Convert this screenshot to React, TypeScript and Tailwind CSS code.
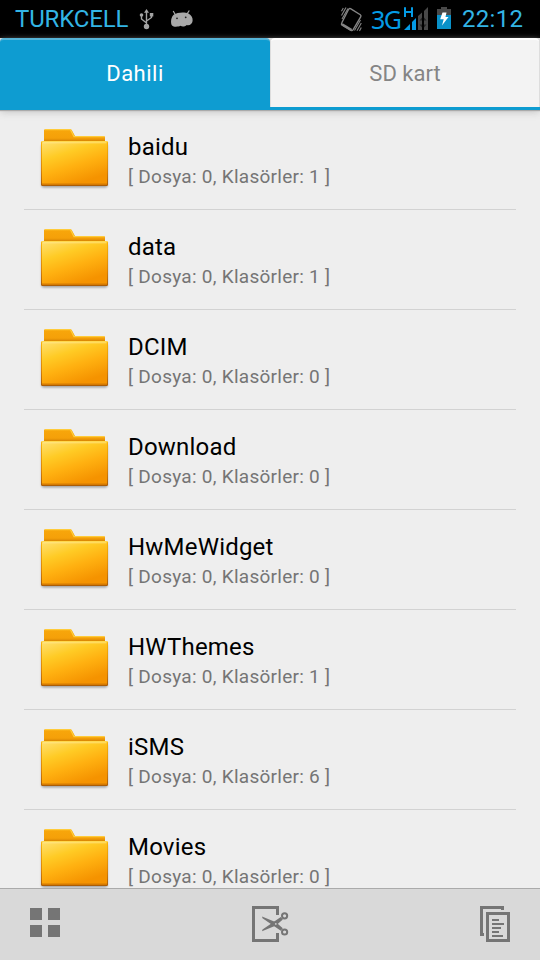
import React from "react";

const folders = [
  { name: "baidu", count: 1 },
  { name: "data", count: 1 },
  { name: "DCIM", count: 0 },
  { name: "Download", count: 0 },
  { name: "HwMeWidget", count: 0 },
  { name: "HWThemes", count: 1 },
  { name: "iSMS", count: 6 },
  { name: "Movies", count: 0 },
];

function UsbIcon() {
  return (
    <svg className="ml-[10px] h-[38px] w-4 shrink-0" viewBox="138 0 16 38" fill="none" stroke="#a3a3a3" strokeWidth="1.4">
      <path d="M146.5 11V26M141.5 15.5V19L146.5 23M151.5 15.5V17.5L146.5 21" />
      <path d="M146.5 9L149 12.7H144Z" fill="#a3a3a3" stroke="none" />
      <circle cx="141.5" cy="15" r="1.8" fill="#a3a3a3" stroke="none" />
      <rect x="149.8" y="13" width="3.5" height="3.5" fill="#a3a3a3" stroke="none" />
      <circle cx="146.5" cy="26.5" r="2.7" fill="#a3a3a3" stroke="none" />
    </svg>
  );
}

function DroidIcon() {
  return (
    <svg className="ml-[16px] h-[38px] w-6 shrink-0" viewBox="170 0 24 38">
      <path d="M174 14.5C177 12.5 184 11.5 188.5 13.5C191.5 15 193 18 192.6 21C192.2 24 189.5 25.8 186.8 25C184.5 27 182 27 180.5 25.8C178 27 173.5 27.2 172 25.5C170.3 23 171 16.5 174 14.5Z" fill="#a9a9a9" />
      <path d="M173.2 11L175.2 14.5M189.3 10.5L187 14" stroke="#a9a9a9" strokeWidth="1.2" />
      <circle cx="177" cy="18.3" r="0.9" fill="#222" />
      <circle cx="185.7" cy="17.3" r="0.9" fill="#222" />
    </svg>
  );
}

function VibrateIcon() {
  return (
    <svg className="h-[38px] w-6 shrink-0" viewBox="339 0 24 38" fill="none" stroke="#858585">
      <path d="M350.5 8.7L360.3 14.7Q361.3 15.5 360.8 16.7L353.2 29.6Q352.3 31 350.8 30.3L342.2 25.1Q341 24.3 341.7 23L348.5 9.5Q349.3 8 350.5 8.7Z" strokeWidth="1.4" />
      <path d="M342 24.2L351.6 30" strokeWidth="2.5" />
      <path d="M341.5 11.2L343.3 8M341.5 15.5L346 7.6M342 19L348 8.5M354.5 30.6L360.5 20M357 30.8L361.3 23M359.5 31L361.3 27.5" strokeWidth="1.1" />
    </svg>
  );
}

function SignalIcon() {
  return (
    <svg className="h-[38px] w-[26px] shrink-0" viewBox="403 0 26 38">
      <path d="M404 30L410 24V30Z" fill="#049be5" />
      <path d="M412 22L416 18V30H412Z" fill="#049be5" />
      <path d="M418 16L422 12.5V30H418ZM424 11L428 7V30H424Z" fill="#484848" />
      <path d="M419.5 20.5L422 17.5V20.5ZM424 17.5L426.5 20.5H424ZM419.5 24.5H422V27.5ZM424 24.5H426.5L424 27.5Z" fill="#222" />
      <path d="M405 7.2V17M412 7.2V17M405 12H412" stroke="#049be5" strokeWidth="2" />
    </svg>
  );
}

function BatteryIcon() {
  return (
    <svg className="ml-2 h-[38px] w-[14px] shrink-0" viewBox="437 0 14 38">
      <path d="M441 7H447V9H451V15H437V9H441Z" fill="#494949" />
      <path d="M437 15H451V29H437Z" fill="#0991c9" />
      <path d="M442.5 12.5H446.5L445.5 17H448.5L442 25.5L443.7 19.2H440.2Z" fill="#fff" />
    </svg>
  );
}

function FolderIcon() {
  return (
    <svg className="h-[66px] w-[72px] shrink-0" viewBox="38 125 72 66">
      <defs>
        <linearGradient id="front" x1="0" y1="0" x2="0.5" y2="1">
          <stop offset="0" stopColor="#ffe070" />
          <stop offset="0.35" stopColor="#ffcb25" />
          <stop offset="0.65" stopColor="#ffb010" />
          <stop offset="1" stopColor="#f59300" />
        </linearGradient>
        <linearGradient id="rim" x1="0" y1="0" x2="0" y2="1">
          <stop offset="0" stopColor="#fbb60a" />
          <stop offset="0.65" stopColor="#d98308" />
          <stop offset="1" stopColor="#a85c08" />
        </linearGradient>
        <linearGradient id="back" x1="0" y1="0" x2="0" y2="1">
          <stop offset="0" stopColor="#f8a70b" />
          <stop offset="0.7" stopColor="#f5a009" />
          <stop offset="1" stopColor="#cf7c00" />
        </linearGradient>
        <filter id="soft" x="-10%" y="-10%" width="120%" height="125%">
          <feGaussianBlur stdDeviation="1.2" />
        </filter>
      </defs>
      <rect x="41.5" y="144" width="66" height="43.5" rx="2" fill="#000" opacity="0.32" filter="url(#soft)" />
      <path d="M44 142V130.5Q44 129 45.5 129H70Q71.3 129 72 130.5L75 136H103.5Q105 136 105 137.5V142Z" fill="url(#back)" />
      <path d="M45 129.7H70.5L74 136.7H104.5" fill="none" stroke="#ffcb3a" strokeWidth="1.3" />
      <rect x="41" y="141" width="67" height="45" rx="1.5" fill="url(#rim)" />
      <rect x="42" y="142" width="65" height="42.5" rx="1" fill="url(#front)" />
      <path d="M41.7 141.6H107.3" stroke="#ffd84e" strokeWidth="1.2" />
      <path d="M42.5 142.8H106.5" stroke="#fff0a8" strokeWidth="0.8" opacity="0.7" />
      <path d="M42 184.2H107" stroke="#d67a00" strokeWidth="1.2" />
    </svg>
  );
}

function GridIcon() {
  return (
    <svg className="h-9 w-9" viewBox="27 905 36 36" fill="#757575">
      <path d="M30 908H42V920H30ZM48 908H60V920H48ZM30 925H42V937H30ZM48 925H60V937H48Z" />
    </svg>
  );
}

function CutIcon() {
  return (
    <svg className="h-[37px] w-[38px]" viewBox="251 905 38 37" fill="none" stroke="#757575">
      <path d="M277.5 915V907.5H253.5V940.5H277.5V933" strokeWidth="3" />
      <path d="M262 916.6L276 922.2L282.8 928.2L280.8 930.8L273.5 925.7L262.5 918.2Z" fill="#757575" stroke="none" />
      <path d="M262 931.2L276 925.6L282.8 919.6L280.8 917L273.5 922.1L262.5 929.6Z" fill="#757575" stroke="none" />
      <circle cx="284.6" cy="915.8" r="2.6" strokeWidth="2" />
      <circle cx="284.6" cy="932" r="2.6" strokeWidth="2" />
      <circle cx="275.8" cy="923.9" r="0.9" fill="#ccc" stroke="none" />
    </svg>
  );
}

function CopyIcon() {
  return (
    <svg className="h-[37px] w-9" viewBox="477 905 36 37" fill="none" stroke="#757575">
      <path d="M484 934.5H481.5V907.5H502.5V910" strokeWidth="3" />
      <rect x="487.5" y="913.5" width="21" height="27" strokeWidth="3" />
      <path d="M492 920H499M492 924H504M492 928H501M492 932H499M492 936H503" strokeWidth="2" />
    </svg>
  );
}

export default function App() {
  return (
    <div className="flex h-[960px] w-[540px] flex-col overflow-hidden bg-[#eee] font-['Roboto','Noto_Sans',sans-serif]">
      <header className="flex h-[38px] shrink-0 items-center justify-between bg-black text-[#33b5e5]">
        <div className="flex items-center pl-[15px]">
          <span className="w-[113px] whitespace-nowrap text-[24px] leading-[36px] tracking-[-0.15px]">TURKCELL</span>
          <UsbIcon />
          <DroidIcon />
        </div>
        <div className="flex items-center pr-[16px]">
          <VibrateIcon />
          <span className="ml-2 w-8 font-['Noto_Sans',sans-serif] text-[25px] leading-[36px] tracking-[-1.5px] text-[#049be5]">3G</span>
          <SignalIcon />
          <BatteryIcon />
          <span className="ml-[11px] w-[62px] whitespace-nowrap text-[24px] leading-[38px] tracking-[0.3px]">22:12</span>
        </div>
      </header>
      <nav className="z-10 flex h-[72px] shrink-0 border-b-[3px] border-[#0e9cd1] bg-[#ddd] text-[22px] shadow-[0_1px_1px_#aaa,0_3px_7px_#ccc]">
        <div className="flex w-[270px] items-center justify-center rounded-t-[4px] border-t-2 border-[#56b5d8] bg-[#0e9cd1] pb-px tracking-[0.5px] text-white">Dahili</div>
        <div className="ml-px flex w-[268px] items-center justify-center rounded-t-[4px] border-t-2 border-white bg-[#f3f3f3] pb-px text-[#858585]">SD kart</div>
      </nav>
      <main className="min-h-0 flex-1 overflow-hidden px-6">
        {folders.map((folder) => (
          <div key={folder.name} className="flex h-[100px] border-b border-[#d2d2d2] pt-[15px] pl-[14px]">
            <FolderIcon />
            <div className="ml-[18px] pt-[7px]">
              <div className="text-[24px] leading-[30px] tracking-[0.2px] text-black">{folder.name}</div>
              <div className="text-[19px] leading-[29px] tracking-[0.27px] text-[#757575]">[ Dosya: 0, Klasörler: {folder.count} ]</div>
            </div>
          </div>
        ))}
      </main>
      <footer className="flex h-[72px] shrink-0 items-start justify-between border-t border-[#aaa] bg-[#d9d9d9] px-[27px] pt-4">
        <GridIcon />
        <CutIcon />
        <CopyIcon />
      </footer>
    </div>
  );
}
